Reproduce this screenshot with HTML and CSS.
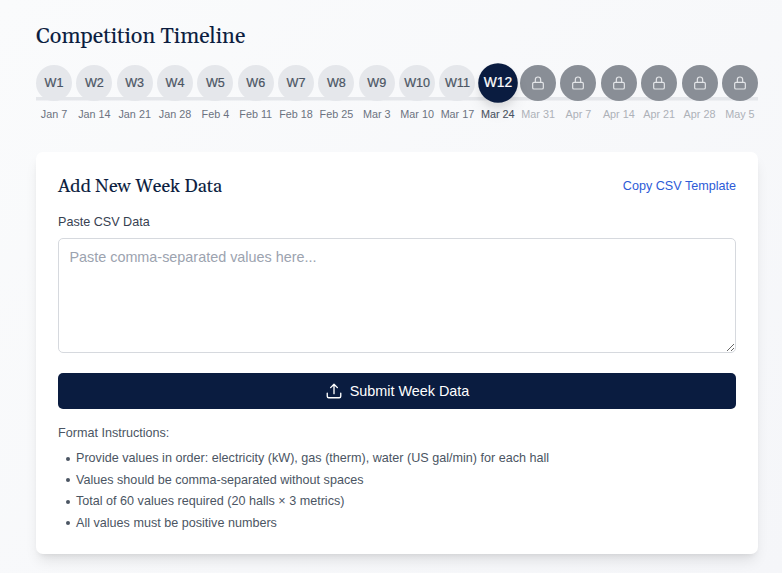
FILE: index.html
```html
<!DOCTYPE html>
<html lang="en">
<head>
<meta charset="utf-8">
<title>Competition Timeline</title>
<link rel="stylesheet" href="styles.css">
</head>
<body>
<svg class="defs" aria-hidden="true">
  <symbol id="lock" viewBox="0 0 24 24"><path d="M6 21h12a2 2 0 0 0 2-2v-6a2 2 0 0 0-2-2H6a2 2 0 0 0-2 2v6a2 2 0 0 0 2 2ZM16 11V7a4 4 0 0 0-8 0v4" /></symbol>
</svg>
<main>
  <h1>Competition Timeline</h1>
  <ol class="timeline" id="timeline"></ol>
  <section class="card">
    <header class="card-head">
      <h2>Add New Week Data</h2>
      <button class="copy" type="button">Copy CSV Template</button>
    </header>
    <label for="csv">Paste CSV Data</label>
    <textarea id="csv" placeholder="Paste comma-separated values here..."></textarea>
    <button class="submit" type="button">
      <svg viewBox="0 0 24 24"><path d="M3 15v4a2 2 0 0 0 2 2h14a2 2 0 0 0 2-2v-4M7.5 7.5 12 3l4.500 4.500M12 3v12.500"/></svg>
      <span>Submit Week Data</span>
    </button>
    <div class="help">
      <p>Format Instructions:</p>
      <ul>
        <li>Provide values in order: electricity (kW), gas (therm), water (US gal/min) for each hall</li>
        <li>Values should be comma-separated without spaces</li>
        <li>Total of 60 values required (20 halls × 3 metrics)</li>
        <li>All values must be positive numbers</li>
      </ul>
    </div>
  </section>
</main>
<script src="script.js"></script>
</body>
</html>
```
FILE: styles.css
```css
* { box-sizing: border-box; }
body {
  margin: 0;
  height: 573px;
  overflow: hidden;
  background: linear-gradient(135deg, #fafbfc, #f5f6f9);
  font-family: "Liberation Sans", Arial, sans-serif;
  color: #4b5563;
}
.defs { display: none; }
main { padding: 22px 24px 0 36px; }
h1, h2 {
  margin: 0;
  font-family: Gelasio, Georgia, "Liberation Serif", serif;
  font-weight: 400;
  color: #0b1d40;
  white-space: nowrap;
  -webkit-text-stroke: .1px;
}
h1 { font-size: 21.6px; line-height: 29px; }
.timeline {
  display: flex;
  justify-content: space-between;
  list-style: none;
  margin: 13.500px 0 0;
  padding: 0;
  background: linear-gradient(#e5e7eb, #e5e7eb) 0 32.500px / 100% 3.500px no-repeat;
}
.week {
  width: 36px;
  display: flex;
  flex-direction: column;
  align-items: center;
  white-space: nowrap;
}
.dot {
  width: 36px;
  height: 36px;
  flex: none;
  border-radius: 50%;
  display: flex;
  align-items: center;
  justify-content: center;
  background: #e5e7eb;
  font-size: 12.6px;
  -webkit-text-stroke: .2px;
}
.date { margin-top: 6.700px; font-size: 10.8px; line-height: 14.400px; color: #6b7280; }
.current .dot {
  background: #0a1c40;
  color: #fff;
  transform: scale(1.1);
  box-shadow: 0 4px 6px rgba(0,0,0,.07), 0 9px 14px rgba(0,0,0,.06);
}
.current .date { color: #4b5563; -webkit-text-stroke: .1px; }
.locked .dot { background: #898e96; color: #e3e5e8; }
.locked .date { color: #adb1b8; }
.dot svg { width: 16px; height: 16px; fill: none; stroke: currentColor; stroke-width: 1.8; stroke-linejoin: round; }
.card {
  margin-top: 30px;
  height: 402px;
  padding: 22px;
  background: #fff;
  border-radius: 7px;
  box-shadow: 0 9px 14px -3px rgba(0,0,0,.1), 0 4px 6px -4px rgba(0,0,0,.1);
}
.card-head { display: flex; justify-content: space-between; align-items: center; height: 25px; }
h2 { font-size: 18px; line-height: 25px; }
button { border: 0; padding: 0; font-family: inherit; }
.copy { background: none; color: #2d5bd7; font-size: 12.6px; }
label { display: block; margin-top: 14px; font-size: 12.6px; line-height: 18px; color: #374151; }
textarea {
  display: block;
  width: 100%;
  height: 115px;
  margin-top: 7px;
  padding: 8px 10.400px;
  border: 1px solid #d6d9de;
  border-radius: 5px;
  background: #fff;
  font: 14.400px/20px "Liberation Sans", Arial, sans-serif;
  resize: vertical;
}
textarea::placeholder { color: #9ca3af; }
.submit {
  display: flex;
  align-items: center;
  justify-content: center;
  gap: 7px;
  width: 100%;
  height: 36px;
  margin-top: 20.300px;
  border-radius: 5px;
  background: #0a1c40;
  color: #fff;
  font-size: 14.400px;
}
.submit svg { width: 18px; height: 18px; fill: none; stroke: currentColor; stroke-width: 1.8; stroke-linecap: round; stroke-linejoin: round; }
.help { margin-top: 14.700px; font-size: 12.6px; line-height: 18px; }
.help p { margin: 0; }
.help ul { margin: 7.500px 0 0; padding: 0; list-style: none; }
.help li { display: flex; align-items: center; margin-bottom: 3.600px; }
.help li::before { content: ""; width: 4px; height: 4px; margin: 1px 6px 0 8px; border-radius: 50%; background: currentColor; }
```
FILE: script.js
```js
const dates = ["Jan 7", "Jan 14", "Jan 21", "Jan 28", "Feb 4", "Feb 11", "Feb 18", "Feb 25", "Mar 3",
  "Mar 10", "Mar 17", "Mar 24", "Mar 31", "Apr 7", "Apr 14", "Apr 21", "Apr 28", "May 5"];
const current = 12;
document.getElementById("timeline").innerHTML = dates.map((date, i) => {
  const week = i + 1;
  const state = week === current ? "current" : week > current ? "locked" : "";
  const face = week > current ? '<svg><use href="#lock"/></svg>' : `W${week}`;
  return `<li class="week ${state}"><div class="dot">${face}</div><span class="date">${date}</span></li>`;
}).join("");
```
